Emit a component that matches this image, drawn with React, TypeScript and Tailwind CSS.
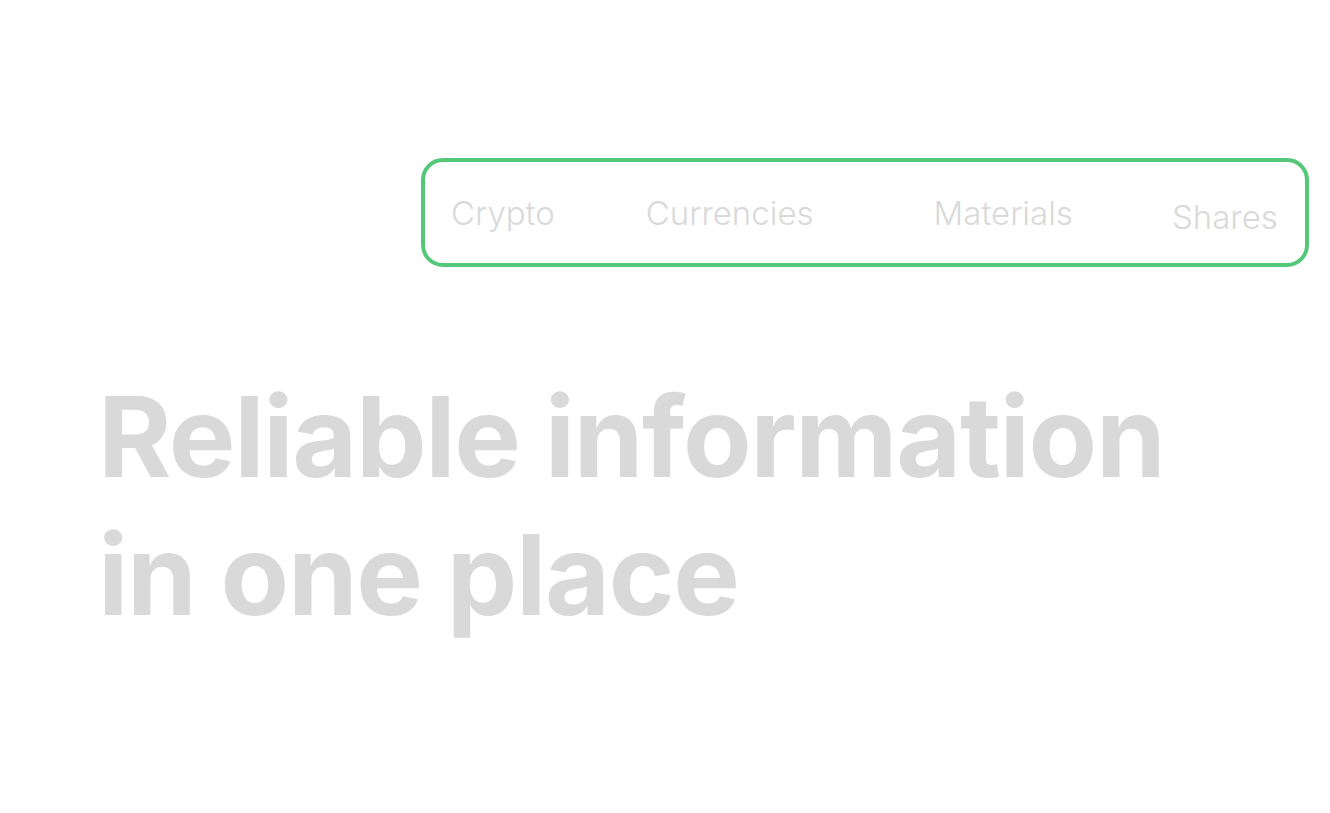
export default function App() {
  return (
    <div className="min-h-screen w-full bg-white" style={{ fontFamily: 'Inter, "Noto Sans", sans-serif' }}>
      <div className="pt-[158px] pl-[421px]">
        <nav className="flex h-[109px] w-[888px] items-center rounded-[22px] border-4 border-[#52c878] pt-[3px] text-[33px] font-light text-[#d9d9d9]">
          <span className="ml-[26px]">Crypto</span>
          <span className="ml-[91px]">Currencies</span>
          <span className="ml-[120px]">Materials</span>
          <span className="ml-[99px] mt-[8px]">Shares</span>
        </nav>
      </div>
      <h1 className="mt-[100px] pl-[98px] text-[112px] font-bold leading-[138px] tracking-[-0.012em] text-[#d9d9d9]">
        Reliable information
        <br />
        in one place
      </h1>
    </div>
  );
}
